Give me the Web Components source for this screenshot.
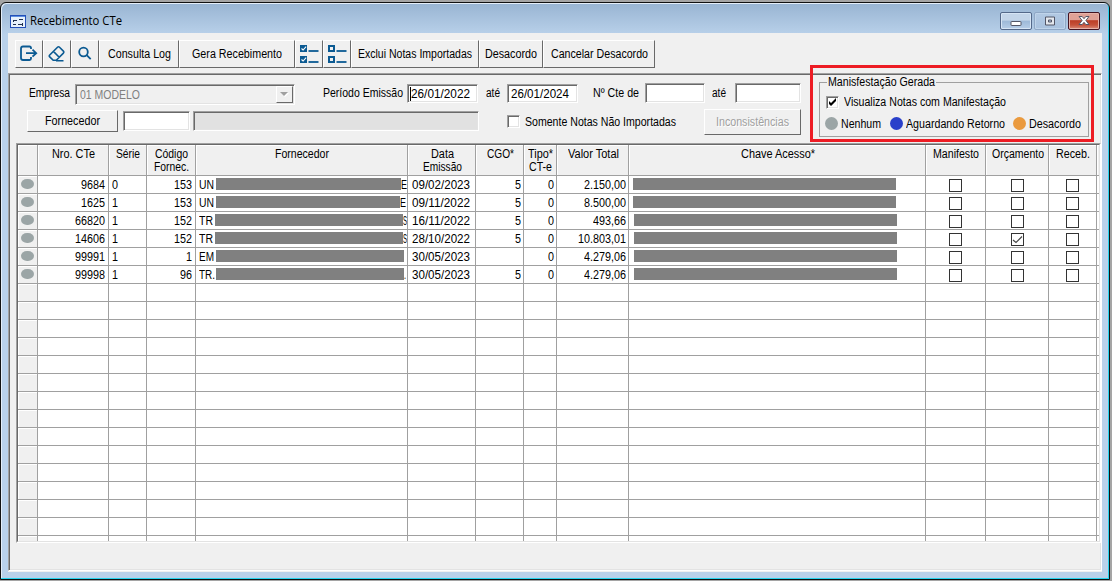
<!DOCTYPE html>
<html lang="pt-BR">
<head>
<meta charset="utf-8">
<title>Recebimento CTe</title>
<style>
    body {
        margin: 0;
        width: 1112px;
        height: 581px;
        overflow: hidden;
        background: #a5a5a5;
        color: #000;
        font: 12px/14px "Liberation Sans", Arial, sans-serif;
    }
</style>
</head>
<body>
<cte-window></cte-window>

<script>
// Text squeezed to the width given in "w", like the old bitmap system font
class FitText extends HTMLElement {
    connectedCallback() {
        if (this.shadowRoot) return;
        this.attachShadow({ mode: 'open' });
        this.shadowRoot.innerHTML = `
            <style>
                :host { display: inline-block; white-space: nowrap; flex: none; text-align: left; }
                span { display: inline-block; transform-origin: 0 50%; }
            </style>
            <span>${this.getAttribute('text')}</span>
        `;
        const w = Number(this.getAttribute('w'));
        const span = this.shadowRoot.querySelector('span');
        const natural = span.getBoundingClientRect().width;
        this.style.width = w + 'px';
        span.style.transform = `scaleX(${w / natural})`;
    }
}
customElements.define('fit-text', FitText);

class ToolButton extends HTMLElement {
    constructor() {
        super();
        this.attachShadow({ mode: 'open' });
        this.shadowRoot.innerHTML = `
            <style>
                :host {
                    display: flex;
                    flex: none;
                    box-sizing: border-box;
                    align-items: center;
                    justify-content: center;
                    background: #f0f0f0;
                    border: 1px solid;
                    border-color: #fff #696969 #696969 #fff;
                }
                :host([disabled]) { color: #a0a0a0; text-shadow: 1px 1px #fff; }
            </style>
            <slot></slot>
        `;
    }
}
customElements.define('tool-button', ToolButton);

class SunkenField extends HTMLElement {
    constructor() {
        super();
        this.attachShadow({ mode: 'open' });
        this.shadowRoot.innerHTML = `
            <style>
                :host {
                    display: flex;
                    flex: none;
                    box-sizing: border-box;
                    align-items: center;
                    background: #fff;
                    border: 1px solid;
                    border-color: #a0a0a0 #fff #fff #a0a0a0;
                    box-shadow: inset 1px 1px #696969, inset -1px -1px #e3e3e3;
                }
                :host([disabled]) { background: #e1e1e1; color: #808080; }
            </style>
            <slot></slot>
        `;
    }
}
customElements.define('sunken-field', SunkenField);

class CheckMark extends HTMLElement {
    connectedCallback() {
        if (this.shadowRoot) return;
        this.attachShadow({ mode: 'open' });
        const flat = this.hasAttribute('flat');
        const tick = flat
            ? '<path d="M2 7 L5 9.5 L11 3.5" fill="none" stroke="#444" stroke-width="1.2"/>'
            : '<path d="M3 5v3l2 2 5-5V2L5 7z" fill="#000"/>';
        this.shadowRoot.innerHTML = `
            <style>
                :host { display: block; flex: none; width: 13px; height: 13px; }
                div { box-sizing: border-box; width: 13px; height: 13px; background: #fff; }
                .deep {
                    border: 1px solid;
                    border-color: #a0a0a0 #fff #fff #a0a0a0;
                    box-shadow: inset 1px 1px #696969, inset -1px -1px #e3e3e3;
                }
                .flat { border: 1px solid #333; }
                svg { display: block; margin: -1px; }
            </style>
            <div class="${flat ? 'flat' : 'deep'}">
                ${this.hasAttribute('checked') ? `<svg width="13" height="13">${tick}</svg>` : ''}
            </div>
        `;
    }
}
customElements.define('check-mark', CheckMark);

class CaptionButtons extends HTMLElement {
    constructor() {
        super();
        this.attachShadow({ mode: 'open' });
        this.shadowRoot.innerHTML = `
            <style>
                :host { display: flex; gap: 2px; }
                div {
                    display: flex;
                    box-sizing: border-box;
                    width: 32px;
                    height: 18px;
                    align-items: center;
                    justify-content: center;
                    border: 1px solid #54698a;
                    border-radius: 2px;
                    background: linear-gradient(#c3d5e9 0 45%, #9db9d8 50%, #b7cee8);
                    box-shadow: inset 0 0 0 1px #d6e5f5;
                }
                .max { border-color: #8fa7c5; background: linear-gradient(#b2c9e3, #a9c2df); box-shadow: inset 0 0 0 1px #bfd4ea; }
                .close {
                    border-color: #431422;
                    background: linear-gradient(#dfa196 0 42%, #bb3d26 48%, #c5513a 75%, #d98b78);
                    box-shadow: inset 0 0 0 1px #e7b3a9;
                }
            </style>
            <div>
                <svg width="12" height="12"><rect x="1" y="6.5" width="10" height="4" rx=".5" fill="#fff" stroke="#535666"/></svg>
            </div>
            <div class="max">
                <svg width="12" height="12"><path d="M1.500 2h9v8h-9z M4.500 5h3v2h-3z" fill="#e4e8ee" fill-rule="evenodd" stroke="#535666"/></svg>
            </div>
            <div class="close">
                <svg width="14" height="12"><path d="M2 1.5h3.2L7 3.7 8.8 1.5H12L8.9 5.5 12 9.5H8.8L7 7.3 5.2 9.5H2L5.1 5.5z" fill="#fff" stroke="#535666"/></svg>
            </div>
        `;
    }
}
customElements.define('caption-buttons', CaptionButtons);

class CteToolbar extends HTMLElement {
    constructor() {
        super();
        this.attachShadow({ mode: 'open' });
        const list = (fill) => [3, 14].map((y) => `
            <rect x="2" y="${y}" width="5" height="5" fill="${fill}" stroke="#0b5a92" stroke-width="2"/>
            ${fill === '#f0f0f0' ? '' : `<path d="M2.5 ${y + 2.5}l1.6 1.5 3-3.3" fill="none" stroke="#fff" stroke-width="1.1"/>`}
            <path d="M9.500 ${y + 5}h10" stroke="#0b5a92" stroke-width="1.8"/>`).join('');
        this.shadowRoot.innerHTML = `
            <style>
                :host { display: flex; height: 28px; padding: 7px 0 0 7px; }
                svg { display: block; fill: none; stroke: #0b5a92; stroke-width: 1.8; }
            </style>
            <tool-button style="width:28px">
                <svg width="20" height="20" viewBox="0 0 20 20"><path d="M12 5V4Q12 2.500 10.500 2.500H4Q2 2.500 2 4.500V14Q2 16 4 16H10.500Q12 16 12 14.500V13"/><path d="M7 9.200H17M13.500 5.700L17.200 9.200L13.500 12.700"/></svg>
            </tool-button>
            <tool-button style="width:28px">
                <svg width="20" height="20" viewBox="0 0 20 20"><path d="M2.500 11.200L10.500 3.200Q11.500 2.200 12.500 3.200L16.400 7.100Q17.400 8.100 16.400 9.100L9.300 16.300H6.200L2.500 12.600Q1.800 11.900 2.500 11.200zM6.400 7.400L12.200 13.300M9 16.800H16.500" stroke-width="1.6"/></svg>
            </tool-button>
            <tool-button style="width:28px">
                <svg width="20" height="20" viewBox="0 0 20 20"><circle cx="8.500" cy="8" r="4.300"/><path d="M11.700 11.200L15.700 15.200"/></svg>
            </tool-button>
            <tool-button style="width:80px"><fit-text text="Consulta Log" w="63"></fit-text></tool-button>
            <tool-button style="width:116px"><fit-text text="Gera Recebimento" w="90"></fit-text></tool-button>
            <tool-button style="width:28px"><svg width="20" height="22">${list('#0b5a92')}</svg></tool-button>
            <tool-button style="width:28px"><svg width="20" height="22">${list('#f0f0f0')}</svg></tool-button>
            <tool-button style="width:128px"><fit-text text="Exclui Notas Importadas" w="114"></fit-text></tool-button>
            <tool-button style="width:64px"><fit-text text="Desacordo" w="52"></fit-text></tool-button>
            <tool-button style="width:112px"><fit-text text="Cancelar Desacordo" w="97"></fit-text></tool-button>
        `;
    }
}
customElements.define('cte-toolbar', CteToolbar);

class CteFilters extends HTMLElement {
    constructor() {
        super();
        this.attachShadow({ mode: 'open' });
        this.shadowRoot.innerHTML = `
            <style>
                :host { display: flex; height: 68px; }
                .fields { width: 809px; }
                .row { display: flex; align-items: flex-start; }
                .row.first { height: 27px; padding: 8px 0 0 19px; }
                .row.second { padding-left: 17px; }
                .lbl { margin-top: 3px; }
                sunken-field fit-text { margin-left: 4px; }
                .combo { justify-content: space-between; }
                .combo tool-button { width: 17px; height: 17px; margin-right: 1px; }
                .caret { border-left: 1px solid #000; height: 14px; margin-left: 2px; }
                .caret + fit-text { margin-left: 0; }
                fieldset {
                    box-sizing: border-box;
                    width: 270px;
                    height: 62px;
                    margin: 0;
                    padding: 0;
                    border: 1px solid #a0a0a0;
                }
                legend { margin-left: 7px; padding: 0 1px; height: 14px; }
                .check { display: flex; align-items: center; gap: 5px; margin: 6px 0 0 6px; height: 14px; }
                .keys { display: flex; align-items: center; margin: 7px 0 0 5px; height: 14px; }
                .keys fit-text { margin-top: 1px; }
                .dot { width: 13px; height: 13px; border-radius: 50%; margin-right: 3px; }
            </style>
            <div class="fields">
                <div class="row first">
                    <fit-text class="lbl" text="Empresa" w="41"></fit-text>
                    <sunken-field class="combo" disabled style="width:220px;height:21px;margin:1px 0 0 5px;background:#f0f0f0">
                        <fit-text text="01 MODELO" w="60"></fit-text>
                        <tool-button><svg width="9" height="5"><path d="M1 1h8L5 5z" fill="#fff"/><path d="M0 0h8L4 4z" fill="#a0a0a0"/></svg></tool-button>
                    </sunken-field>
                    <fit-text class="lbl" text="Período Emissão" w="80" style="margin-left:28px"></fit-text>
                    <sunken-field style="width:71px;height:19px;margin:1px 0 0 4px">
                        <span class="caret"></span><fit-text text="26/01/2022" w="59"></fit-text>
                    </sunken-field>
                    <fit-text class="lbl" text="até" w="14" style="margin-left:8px"></fit-text>
                    <sunken-field style="width:71px;height:19px;margin:1px 0 0 7px">
                        <fit-text text="26/01/2024" w="58" style="margin-left:3px"></fit-text>
                    </sunken-field>
                    <fit-text class="lbl" text="Nº Cte de" w="46" style="margin-left:15px"></fit-text>
                    <sunken-field style="width:60px;height:20px;margin-left:6px"></sunken-field>
                    <fit-text class="lbl" text="até" w="14" style="margin-left:7px"></fit-text>
                    <sunken-field style="width:66px;height:20px;margin-left:9px"></sunken-field>
                </div>
                <div class="row second">
                    <tool-button style="width:91px;height:22px"><fit-text text="Fornecedor" w="55"></fit-text></tool-button>
                    <sunken-field style="width:67px;height:20px;margin:1px 0 0 5px"></sunken-field>
                    <sunken-field disabled style="width:286px;height:20px;margin:1px 0 0 3px"></sunken-field>
                    <check-mark style="margin:5px 0 0 28px"></check-mark>
                    <fit-text text="Somente Notas Não Importadas" w="151" style="margin:5px 0 0 5px"></fit-text>
                    <tool-button disabled style="width:97px;height:26px;margin:-1px 0 0 28px"><fit-text text="Inconsistências" w="73"></fit-text></tool-button>
                </div>
            </div>
            <fieldset>
                <legend><fit-text text="Manisfestação Gerada" w="107"></fit-text></legend>
                <div class="check">
                    <check-mark checked></check-mark>
                    <fit-text text="Visualiza Notas com Manifestação" w="162"></fit-text>
                </div>
                <div class="keys">
                    <span class="dot" style="background:#9ba5a6"></span>
                    <fit-text text="Nenhum" w="40"></fit-text>
                    <span class="dot" style="background:#2a40ca;margin-left:9px"></span>
                    <fit-text text="Aguardando Retorno" w="99"></fit-text>
                    <span class="dot" style="background:#ea9a3e;margin-left:8px"></span>
                    <fit-text text="Desacordo" w="52"></fit-text>
                </div>
            </fieldset>
        `;
    }
}
customElements.define('cte-filters', CteFilters);

// title lines are [text, width in px]
const columns = [
    { width: 20, title: [] },
    { width: 71, title: [['Nro. CTe', 43]], align: 'right' },
    { width: 38, title: [['Série', 24]] },
    { width: 49, title: [['Código', 33], ['Fornec.', 35]], align: 'right' },
    { width: 212, title: [['Fornecedor', 54]] },
    { width: 68, title: [['Data', 23], ['Emissão', 39]] },
    { width: 48, title: [['CGO*', 27]], align: 'right' },
    { width: 33, title: [['Tipo*', 25], ['CT-e', 23]], align: 'right' },
    { width: 72, title: [['Valor Total', 51]], align: 'right' },
    { width: 297, title: [['Chave Acesso*', 74]] },
    { width: 60, title: [['Manifesto', 46]] },
    { width: 63, title: [['Orçamento', 52]] },
    { width: 48, title: [['Receb.', 34]] },
    { width: 2, title: [] }
];

// bar: [start, end] of the mask over the supplier name; key: offset of the access key mask
const notes = [
    { nro: '9684', serie: '0', cod: '153', forn: 'UN', fw: 15, bar: [20, 205], tail: 'E', data: '09/02/2023', cgo: '5', valor: '2.150,00', vw: 42, key: 4 },
    { nro: '1625', serie: '1', cod: '153', forn: 'UN', fw: 15, bar: [20, 204], tail: 'E', data: '09/11/2022', cgo: '5', valor: '8.500,00', vw: 42, key: 4 },
    { nro: '66820', serie: '1', cod: '152', forn: 'TR', fw: 14, bar: [19, 207], tail: 'S', data: '16/11/2022', cgo: '5', valor: '493,66', vw: 33, key: 5 },
    { nro: '14606', serie: '1', cod: '152', forn: 'TR', fw: 14, bar: [19, 207], tail: 'S', data: '28/10/2022', cgo: '5', valor: '10.803,01', vw: 48, key: 5, orc: true },
    { nro: '99991', serie: '1', cod: '1', forn: 'EM', fw: 15, bar: [20, 208], tail: '', data: '30/05/2023', cgo: '', valor: '4.279,06', vw: 42, key: 5 },
    { nro: '99998', serie: '1', cod: '96', forn: 'TR.', fw: 16, bar: [20, 208], tail: '.', data: '30/05/2023', cgo: '5', valor: '4.279,06', vw: 42, key: 5 }
];

class CteGrid extends HTMLElement {
    constructor() {
        super();
        this.attachShadow({ mode: 'open' });
    }

    connectedCallback() {
        this.render();
    }

    text(value, w) {
        return value ? `<fit-text text="${value}" w="${w}"></fit-text>` : '';
    }

    cells(n) {
        if (!n) return columns.map(() => '');
        const check = '<check-mark flat></check-mark>';
        const tailWidth = { E: 6, S: 4, '.': 2 }[n.tail];
        return [
            '<i class="status"></i>',
            this.text(n.nro, n.nro.length * 6),
            this.text(n.serie, 6),
            this.text(n.cod, n.cod.length * 6),
            `${this.text(n.forn, n.fw)}<i class="mask" style="margin-left:${n.bar[0] - 3 - n.fw}px;width:${n.bar[1] - n.bar[0]}px"></i>${this.text(n.tail, tailWidth)}`,
            this.text(n.data, 58),
            this.text(n.cgo, 6),
            this.text('0', 6),
            this.text(n.valor, n.vw),
            `<i class="mask" style="margin-left:${n.key - 3}px;width:263px"></i>`,
            check,
            n.orc ? '<check-mark flat checked></check-mark>' : check,
            check,
            ''
        ];
    }

    render() {
        const head = columns.map((c) => `<div class="th">${c.title.map((t) => this.text(t[0], t[1])).join('')}</div>`).join('');
        let body = '';
        for (let i = 0; i < 21; i++) {
            const cells = this.cells(notes[i]);
            body += cells.map((html, c) => {
                const kind = c === 0 ? 'sel' : (c >= 10 ? 'chk' : (columns[c].align || ''));
                return `<div class="td ${kind}${c === 1 || c === 3 ? ' id' : ''}${c === 5 ? ' date' : ''}">${html}</div>`;
            }).join('');
        }
        this.shadowRoot.innerHTML = `
            <style>
                :host {
                    display: block;
                    box-sizing: border-box;
                    width: 1085px;
                    height: 400px;
                    margin-left: 6px;
                    overflow: hidden;
                    border: 1px solid;
                    border-color: #a0a0a0 #fff #fff #a0a0a0;
                    background: #fff;
                }
                .grid {
                    display: grid;
                    box-sizing: border-box;
                    height: 398px;
                    overflow: hidden;
                    border: 1px solid;
                    border-color: #696969 #e3e3e3 #e3e3e3 #696969;
                    grid-template-columns: ${columns.map((c) => c.width + 'px').join(' ')};
                    grid-template-rows: 31px repeat(21, 18px);
                }
                .th, .td {
                    display: flex;
                    box-sizing: border-box;
                    min-width: 0;
                    overflow: hidden;
                    border-right: 1px solid #a0a0a0;
                    border-bottom: 1px solid #a0a0a0;
                }
                .th {
                    flex-direction: column;
                    align-items: center;
                    padding: 3px 0 0 1px;
                    line-height: 13px;
                    background: #f0f0f0;
                    box-shadow: inset 1px 1px #fff;
                }
                .th fit-text { height: 13px; }
                .td { align-items: center; padding: 0 0 0 3px; }
                .right { justify-content: flex-end; padding: 0 2px 0 0; }
                .right.id { padding-right: 3px; }
                .date { padding-left: 4px; }
                .sel { background: #f0f0f0; box-shadow: inset 1px 1px #fff; justify-content: center; padding: 0 0 1px; }
                .chk { justify-content: center; padding: 2px 0 0; }
                .th:nth-child(14n), .td:nth-child(14n) { border-right: 0; }
                .status { width: 13px; height: 10px; border-radius: 6px / 5px; background: #9ba5a6; }
                .mask { flex: none; height: 12px; margin-top: -1px; background: #808080; }
            </style>
            <div class="grid">${head}${body}</div>
        `;
    }
}
customElements.define('cte-grid', CteGrid);

class CteWindow extends HTMLElement {
    constructor() {
        super();
        this.attachShadow({ mode: 'open' });
        this.shadowRoot.innerHTML = `
            <style>
                :host {
                    display: block;
                    position: relative;
                    box-sizing: border-box;
                    width: 1110px;
                    height: 578px;
                    margin-top: 2px;
                    padding: 0 7px 0 7px;
                    border: 1px solid #111;
                    border-radius: 6px 6px 0 0;
                    background: linear-gradient(#98b4d2, #b9d1ea 32px);
                    box-shadow: inset -1px -1px #27d3ee, inset 1px 1px #e4eef9;
                }
                header { display: flex; box-sizing: border-box; height: 30px; padding: 9px 2px 0 2px; }
                .title { font: 13px/17px "Open Sans", "Noto Sans", sans-serif; margin: 0 0 0 4px; flex: 1; }
                header svg { margin-top: 3px; }
                main { height: 539px; background: #f0f0f0; }
                .panel {
                    box-sizing: border-box;
                    height: 498px;
                    margin-top: 5px;
                    border: 1px solid;
                    border-color: #a0a0a0 #fff #fff #a0a0a0;
                    box-shadow: inset 1px 1px #696969, inset -1px -1px #e3e3e3;
                    padding: 1px;
                }
                /* callout drawn over the panel and the toolbar */
                .callout {
                    position: absolute;
                    box-sizing: border-box;
                    left: 809px;
                    top: 62px;
                    width: 284px;
                    height: 77px;
                    border: 3px solid #ed1c24;
                }
            </style>
            <header>
                <svg width="16" height="13">
                    <rect x=".5" y=".5" width="15" height="12" fill="#e8f2fc" stroke="#2450b8"/>
                    <path d="M1 1.500h14" stroke="#5d8fe0"/>
                    <path d="M3 5.500h4M3.500 5v2M9 4.500h4M3 9.500h3M8 9.500h4M12.500 8v3" stroke="#20304f" fill="none"/>
                </svg>
                <span class="title"><fit-text text="Recebimento CTe" w="92"></fit-text></span>
                <caption-buttons></caption-buttons>
            </header>
            <main>
                <cte-toolbar></cte-toolbar>
                <div class="panel">
                    <cte-filters></cte-filters>
                    <cte-grid></cte-grid>
                </div>
            </main>
            <div class="callout"></div>
        `;
    }
}
customElements.define('cte-window', CteWindow);
</script>
</body>
</html>
